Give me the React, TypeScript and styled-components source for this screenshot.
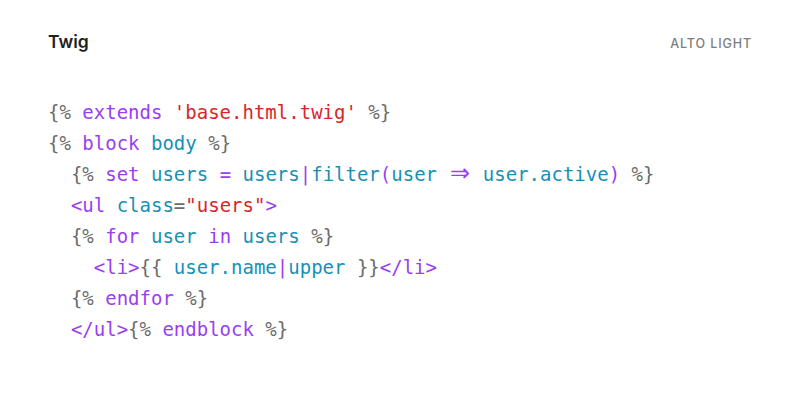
import React from "react";
import styled, { createGlobalStyle } from "styled-components";

const Global = createGlobalStyle`
  html, body { margin: 0; padding: 0; background: #ffffff; }
  body { width: 800px; height: 400px; overflow: hidden; }
`;

const Page = styled.div`
  width: 800px;
  height: 400px;
  box-sizing: border-box;
  padding: 31px 48px 0 48px;
  display: flex;
  flex-direction: column;
  background: #ffffff;
`;

const Header = styled.div`
  display: flex;
  justify-content: space-between;
  align-items: baseline;
`;

const Title = styled.div`
  font-family: Inter, "Noto Sans", sans-serif;
  font-weight: 600;
  font-size: 17.5px;
  color: #1f1f1f;
  line-height: 22px;
`;

const Theme = styled.div`
  font-family: Inter, "Noto Sans", sans-serif;
  font-weight: 500;
  font-size: 12.5px;
  letter-spacing: 0.9px;
  color: #7d7d7d;
`;

const Code = styled.pre`
  margin: 44px 0 0 0;
  font-family: "DejaVu Sans Mono", "Liberation Mono", monospace;
  font-size: 19px;
  line-height: 31px;
  color: #6b6b6b;
`;

const Line = styled.div<{ $indent: number }>`
  padding-left: ${(p) => p.$indent}ch;
  white-space: pre;
  height: 31px;
`;

const colors: Record<string, string> = {
  p: "#6b6b6b",
  k: "#9a3ef0",
  s: "#d7262b",
  v: "#1890b3",
};

const Tok = styled.span<{ $c: string }>`
  color: ${(p) => colors[p.$c]};
`;

const Arrow = styled.span`
  display: inline-block;
  width: 22.88px;
  height: 31px;
  vertical-align: top;
  text-align: center;
  color: #9a3ef0;
  font-family: "DejaVu Sans", sans-serif;
  font-size: 24px;
  line-height: 29px;
`;

type T = [string, string];

const lines: { indent: number; toks: (T | "arrow")[] }[] = [
  { indent: 0, toks: [["p", "{% "], ["k", "extends"], ["p", " "], ["s", "'base.html.twig'"], ["p", " %}"]] },
  { indent: 0, toks: [["p", "{% "], ["k", "block"], ["p", " "], ["v", "body"], ["p", " %}"]] },
  {
    indent: 2,
    toks: [
      ["p", "{% "], ["k", "set"], ["p", " "], ["v", "users"], ["p", " "], ["k", "="], ["p", " "],
      ["v", "users"], ["k", "|"], ["v", "filter"], ["k", "("], ["v", "user"], ["p", " "], "arrow", ["p", " "],
      ["v", "user.active"], ["k", ")"], ["p", " %}"],
    ],
  },
  { indent: 2, toks: [["k", "<ul"], ["p", " "], ["v", "class"], ["p", "="], ["s", "\"users\""], ["k", ">"]] },
  { indent: 2, toks: [["p", "{% "], ["k", "for"], ["p", " "], ["v", "user"], ["p", " "], ["k", "in"], ["p", " "], ["v", "users"], ["p", " %}"]] },
  { indent: 4, toks: [["k", "<li>"], ["p", "{{ "], ["v", "user.name"], ["k", "|"], ["v", "upper"], ["p", " }}"], ["k", "</li>"]] },
  { indent: 2, toks: [["p", "{% "], ["k", "endfor"], ["p", " %}"]] },
  { indent: 2, toks: [["k", "</ul>"], ["p", "{% "], ["k", "endblock"], ["p", " %}"]] },
];

export default function App() {
  return (
    <>
      <Global />
      <Page>
        <Header>
          <Title>Twig</Title>
          <Theme>ALTO LIGHT</Theme>
        </Header>
        <Code>
          {lines.map((l, i) => (
            <Line key={i} $indent={l.indent}>
              {l.toks.map((t, j) =>
                t === "arrow" ? (
                  <Arrow key={j}>⇒</Arrow>
                ) : (
                  <Tok key={j} $c={t[0]}>
                    {t[1]}
                  </Tok>
                )
              )}
            </Line>
          ))}
        </Code>
      </Page>
    </>
  );
}
